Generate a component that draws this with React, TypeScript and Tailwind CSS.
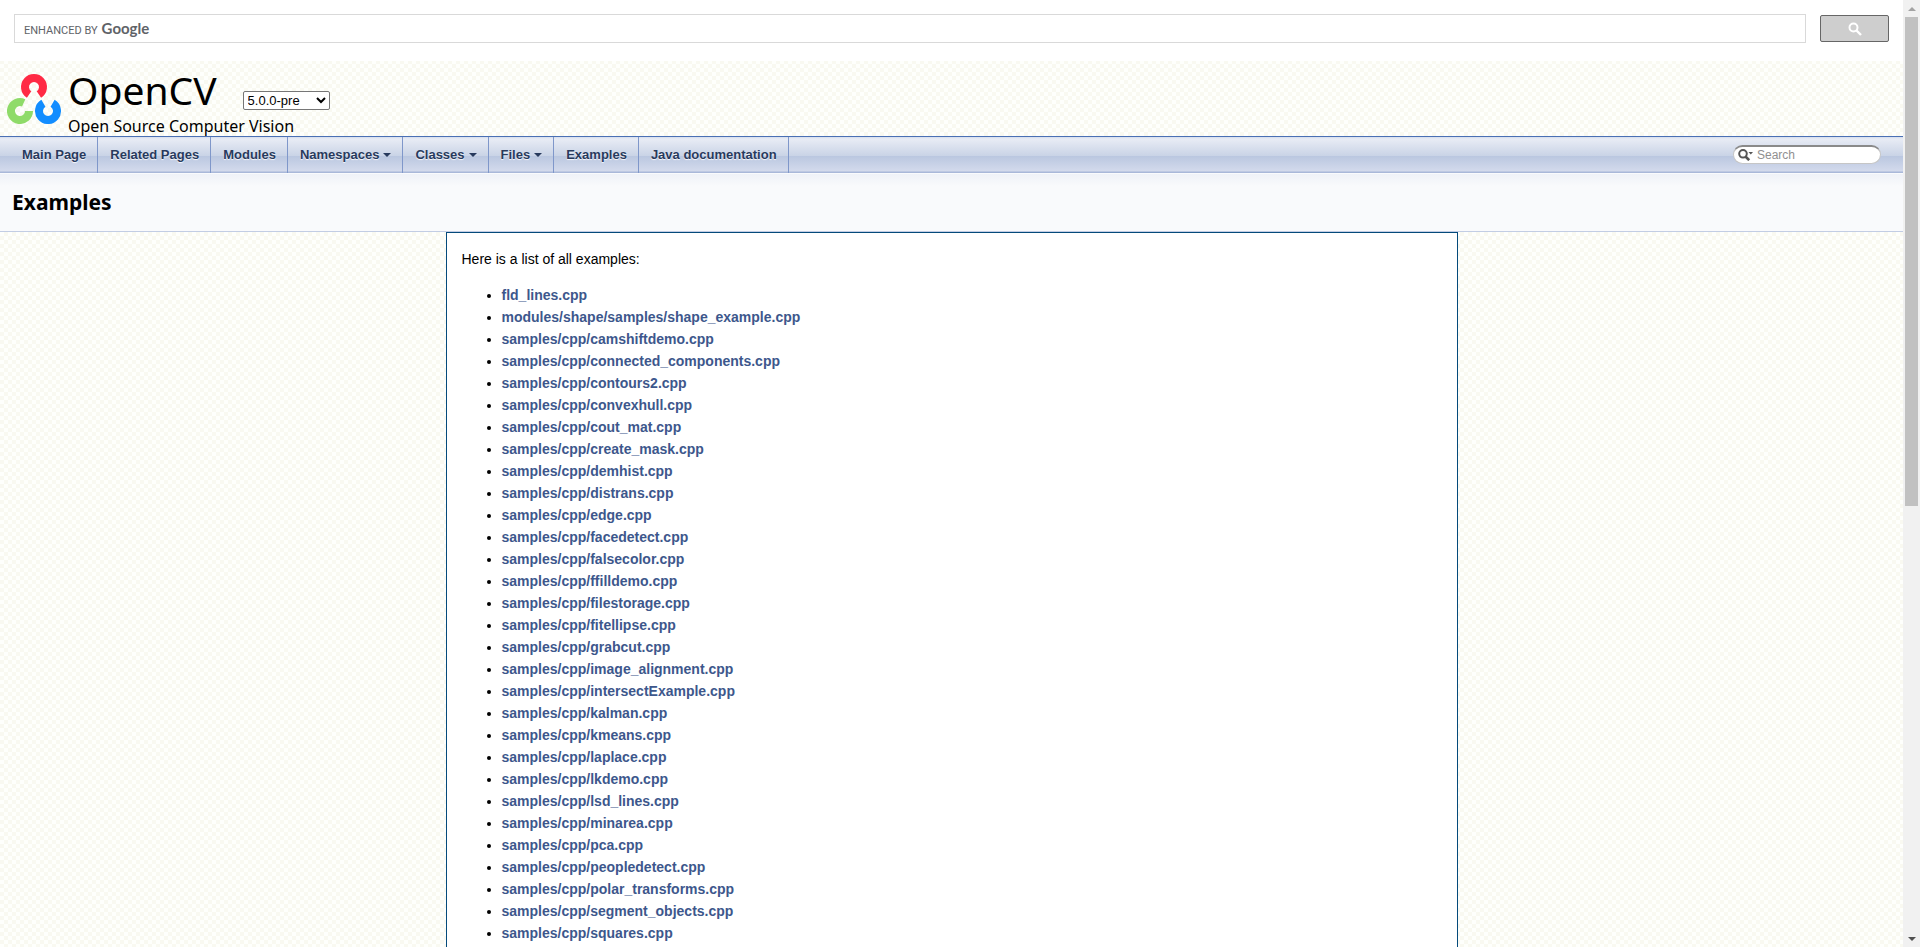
import React from 'react'

interface Tab {
  label: string;
  menu?: boolean;
}

const tabs: Tab[] = [
  { label: 'Main Page' },
  { label: 'Related Pages' },
  { label: 'Modules' },
  { label: 'Namespaces', menu: true },
  { label: 'Classes', menu: true },
  { label: 'Files', menu: true },
  { label: 'Examples' },
  { label: 'Java documentation' },
];

const examples = [
  'fld_lines.cpp',
  'modules/shape/samples/shape_example.cpp',
  'samples/cpp/camshiftdemo.cpp',
  'samples/cpp/connected_components.cpp',
  'samples/cpp/contours2.cpp',
  'samples/cpp/convexhull.cpp',
  'samples/cpp/cout_mat.cpp',
  'samples/cpp/create_mask.cpp',
  'samples/cpp/demhist.cpp',
  'samples/cpp/distrans.cpp',
  'samples/cpp/edge.cpp',
  'samples/cpp/facedetect.cpp',
  'samples/cpp/falsecolor.cpp',
  'samples/cpp/ffilldemo.cpp',
  'samples/cpp/filestorage.cpp',
  'samples/cpp/fitellipse.cpp',
  'samples/cpp/grabcut.cpp',
  'samples/cpp/image_alignment.cpp',
  'samples/cpp/intersectExample.cpp',
  'samples/cpp/kalman.cpp',
  'samples/cpp/kmeans.cpp',
  'samples/cpp/laplace.cpp',
  'samples/cpp/lkdemo.cpp',
  'samples/cpp/lsd_lines.cpp',
  'samples/cpp/minarea.cpp',
  'samples/cpp/pca.cpp',
  'samples/cpp/peopledetect.cpp',
  'samples/cpp/polar_transforms.cpp',
  'samples/cpp/segment_objects.cpp',
  'samples/cpp/squares.cpp',
];

function Logo() {
  return (
    <svg className="mt-[10px] h-[51px] w-[55px]" viewBox="0 0 55 51" fill="none" strokeWidth="8" aria-hidden="true">
      <path d="M22.1 21.5A9 9 0 1 1 31.9 21.5" stroke="#ff2a44" />
      <path d="M22 38A9 9 0 1 1 16.7 29.8" stroke="#8fdb69" />
      <path d="M45.6 30.3A9 9 0 1 1 36.4 30.3" stroke="#128dff" />
    </svg>
  )
}

function GoogleBar() {
  return (
    <form className="flex h-[61px] shrink-0 items-start bg-white px-[14px] pt-[14px]">
      <label className="relative flex-1">
        <span className="absolute inset-y-0 left-[10px] flex items-baseline gap-1 pt-[5px] text-[#5f6368]">
          <span className="font-[Roboto,sans-serif] text-[11px]">ENHANCED BY</span>
          <span className="font-[Lato,sans-serif] text-[15px] leading-[18px] font-bold">Google</span>
        </span>
        <input type="text" aria-label="Google search" className="block h-[29px] w-full border border-[#d9d9d9] outline-none" />
      </label>
      <button
        type="button"
        aria-label="Search the web"
        className="mt-px ml-[14px] flex h-[27px] w-[69px] items-center justify-center rounded-[2px] border border-[#666] bg-[#cecece]">
        <svg className="size-[14px]" viewBox="0 0 14 14" fill="none" stroke="#fff" strokeWidth="2" aria-hidden="true">
          <circle cx="5.500" cy="5.500" r="4" />
          <path d="M8.500 8.500L13 13" strokeWidth="2.400" />
        </svg>
      </button>
    </form>
  )
}

function TitleArea() {
  return (
    <header className="flex h-[75px] shrink-0 items-start pt-[2px] pl-[7px] text-black">
      <Logo />
      <div className="ml-[6px] font-['Noto_Sans',sans-serif]">
        <div className="flex items-start">
          <h1 className="text-[39px] leading-[53px]">OpenCV</h1>
          <select
            aria-label="Version"
            defaultValue="5.0.0-pre"
            className="mt-7 ml-[26px] h-[19px] w-[87px] rounded-[2px] border border-[#767676] bg-white font-['Liberation_Sans',sans-serif] text-[13px] leading-4">
            <option>5.0.0-pre</option>
          </select>
        </div>
        <p className="text-[16px] leading-5">Open Source Computer Vision</p>
      </div>
    </header>
  )
}

function NavBar() {
  return (
    <nav className="flex h-[38px] shrink-0 items-start justify-between border-t border-b border-t-[#4a70b4] border-b-[#fafbfd] bg-[linear-gradient(#d5dded_0px,#e8ecf5_2px,#c9d3e6_19px,#bac7e0_19px,#d3daec_34px,#a9b8d9_35px,#a9b8d9_36px)]">
      <ul className="flex pl-[10px]">
        {tabs.map((tab) => (
          <li key={tab.label} className="border-r border-[#7f97ca]">
            <a
              href="#"
              className="flex h-9 items-center gap-1 pr-[11px] pl-3 text-[13px] font-bold text-[#283a5d] [text-shadow:0_1px_1px_rgba(255,255,255,0.9)]">
              {tab.label}
              {tab.menu && <span className="border-x-4 border-t-4 border-x-transparent border-t-[#283a5d]" />}
            </a>
          </li>
        ))}
      </ul>
      <label className="mt-2 mr-[22px] flex h-[19px] w-[148px] items-center rounded-full border border-t-2 border-[#c6c6c6] border-t-[#8a8a8a] bg-white pl-1">
        <svg className="h-3 w-[15px] shrink-0" viewBox="0 0 15 12" fill="none" aria-hidden="true">
          <circle cx="5" cy="4.800" r="3.800" stroke="#555" strokeWidth="2" />
          <path d="M7.500 7.500L11.200 11.200" stroke="#555" strokeWidth="2.600" />
          <path d="M10.500 3h4.500l-2.200 2.500z" fill="#555" />
        </svg>
        <input
          type="text"
          aria-label="Search"
          placeholder="Search"
          className="ml-1 w-full min-w-0 bg-transparent text-[12px] leading-4 outline-none placeholder:text-[#909090]"
        />
      </label>
    </nav>
  )
}

function Scrollbar() {
  return (
    <div className="flex w-[17px] shrink-0 flex-col items-center bg-[#f1f1f1]" aria-hidden="true">
      <div className="flex h-[17px] items-center">
        <span className="border-x-4 border-b-4 border-x-transparent border-b-[#a3a3a3]" />
      </div>
      <div className="w-[13px] flex-[489] bg-[#c1c1c1]" />
      <div className="flex-[424]" />
      <div className="flex h-[17px] items-center">
        <span className="border-x-4 border-t-4 border-x-transparent border-t-[#505050]" />
      </div>
    </div>
  )
}

export default function App() {
  return (
    <div className="flex h-screen overflow-hidden bg-white font-['Liberation_Sans',Arial,sans-serif]">
      <div className="flex min-w-0 flex-1 flex-col bg-[#fefffc] bg-[conic-gradient(#f9f9f1_25%,transparent_0_50%,#f9f9f1_0_75%,transparent_0)] bg-[size:8px_8px]">
        <GoogleBar />
        <TitleArea />
        <NavBar />
        <div className="h-[58px] shrink-0 border-b border-[#c2cde4] bg-[linear-gradient(#eff2f8,#f9fafc_12px)] px-3 pt-[14px]">
          <h2 className="font-['Noto_Sans',sans-serif] text-[21px] leading-[28px] font-bold text-black">Examples</h2>
        </div>
        <main className="mx-auto w-full max-w-[1012px] flex-1 border border-b-0 border-[#044a7b] bg-white px-[15px] text-[14px] leading-[22px] text-black">
          <p className="mt-[15px]">Here is a list of all examples:</p>
          <ul className="mt-[14px] list-disc pl-10">
            {examples.map((name) => (
              <li key={name}>
                <a href="#" className="font-bold text-[#3d578c]">{name}</a>
              </li>
            ))}
          </ul>
        </main>
      </div>
      <Scrollbar />
    </div>
  )
}
